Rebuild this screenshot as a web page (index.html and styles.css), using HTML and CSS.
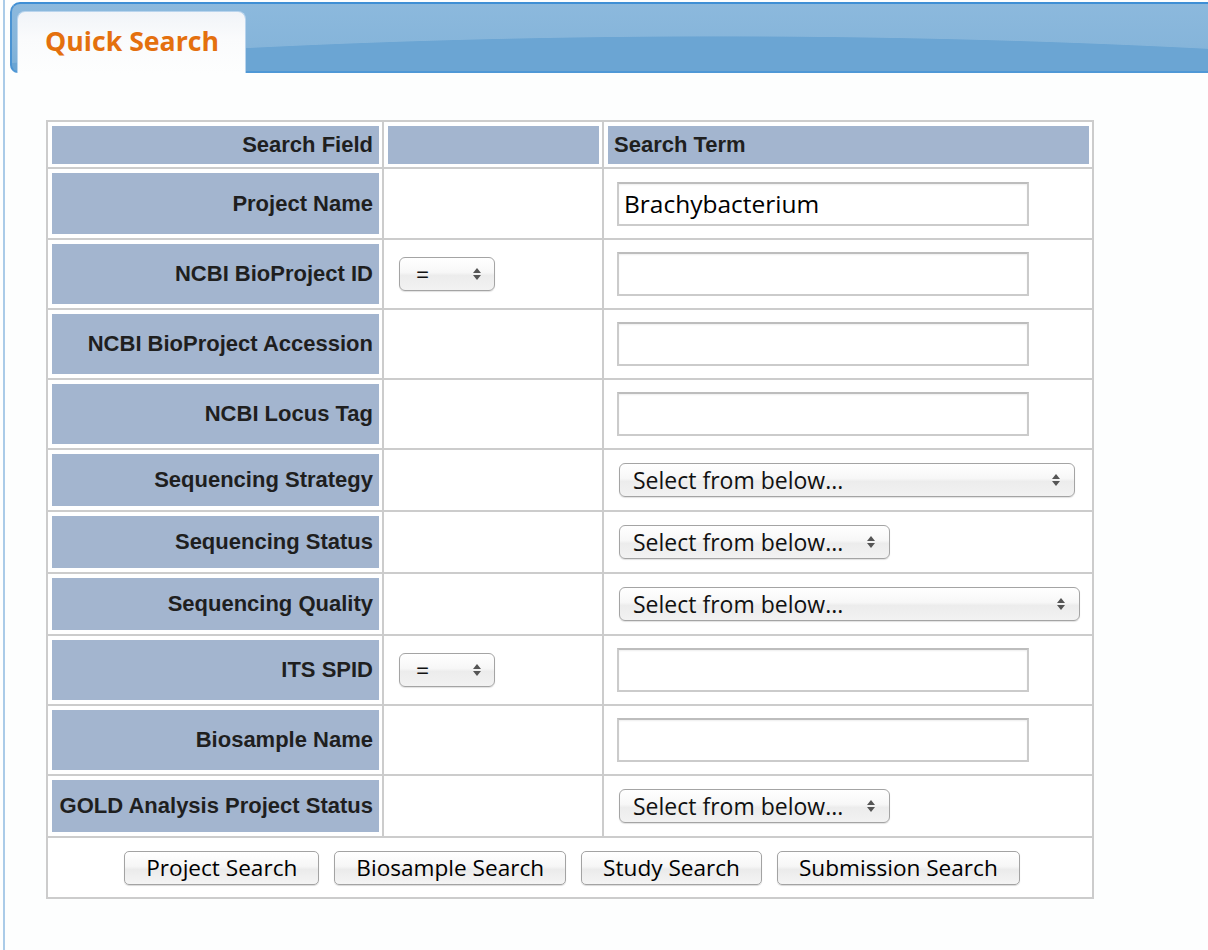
FILE: index.html
```html
<!DOCTYPE html>
<html lang="en">
<head>
<meta charset="utf-8">
<title>Quick Search</title>
<link rel="stylesheet" href="styles.css">
</head>
<body>
<div class="page">
  <div class="tabbar">
    <div class="tab">Quick Search</div>
  </div>
  <div class="content">
    <table class="search">
      <colgroup><col class="c1"><col class="c2"><col class="c3"></colgroup>
      <thead>
        <tr class="r-head">
          <th class="label">Search Field</th>
          <th class="label"></th>
          <th class="label left">Search Term</th>
        </tr>
      </thead>
      <tbody>
        <tr class="r-text r-first">
          <td class="label">Project Name</td>
          <td class="ctrl"></td>
          <td class="ctrl"><input class="text" type="text" value="Brachybacterium"></td>
        </tr>
        <tr class="r-text">
          <td class="label">NCBI BioProject ID</td>
          <td class="ctrl"><div class="select-wrap"><select class="sel sel-op"><option>=</option></select><svg class="arrows" viewBox="0 0 8 12"><path d="M0 5 L4 0 L8 5 Z M0 7 L8 7 L4 12 Z"/></svg></div></td>
          <td class="ctrl"><input class="text" type="text"></td>
        </tr>
        <tr class="r-text">
          <td class="label">NCBI BioProject Accession</td>
          <td class="ctrl"></td>
          <td class="ctrl"><input class="text" type="text"></td>
        </tr>
        <tr class="r-text">
          <td class="label">NCBI Locus Tag</td>
          <td class="ctrl"></td>
          <td class="ctrl"><input class="text" type="text"></td>
        </tr>
        <tr class="r-select">
          <td class="label">Sequencing Strategy</td>
          <td class="ctrl"></td>
          <td class="ctrl"><div class="select-wrap"><select class="sel sel-strategy"><option>Select from below...</option></select><svg class="arrows" viewBox="0 0 8 12"><path d="M0 5 L4 0 L8 5 Z M0 7 L8 7 L4 12 Z"/></svg></div></td>
        </tr>
        <tr class="r-select">
          <td class="label">Sequencing Status</td>
          <td class="ctrl"></td>
          <td class="ctrl"><div class="select-wrap"><select class="sel sel-status"><option>Select from below...</option></select><svg class="arrows" viewBox="0 0 8 12"><path d="M0 5 L4 0 L8 5 Z M0 7 L8 7 L4 12 Z"/></svg></div></td>
        </tr>
        <tr class="r-select">
          <td class="label">Sequencing Quality</td>
          <td class="ctrl"></td>
          <td class="ctrl"><div class="select-wrap"><select class="sel sel-quality"><option>Select from below...</option></select><svg class="arrows" viewBox="0 0 8 12"><path d="M0 5 L4 0 L8 5 Z M0 7 L8 7 L4 12 Z"/></svg></div></td>
        </tr>
        <tr class="r-text">
          <td class="label">ITS SPID</td>
          <td class="ctrl"><div class="select-wrap"><select class="sel sel-op"><option>=</option></select><svg class="arrows" viewBox="0 0 8 12"><path d="M0 5 L4 0 L8 5 Z M0 7 L8 7 L4 12 Z"/></svg></div></td>
          <td class="ctrl"><input class="text" type="text"></td>
        </tr>
        <tr class="r-text">
          <td class="label">Biosample Name</td>
          <td class="ctrl"></td>
          <td class="ctrl"><input class="text" type="text"></td>
        </tr>
        <tr class="r-select">
          <td class="label">GOLD Analysis Project Status</td>
          <td class="ctrl"></td>
          <td class="ctrl"><div class="select-wrap"><select class="sel sel-status"><option>Select from below...</option></select><svg class="arrows" viewBox="0 0 8 12"><path d="M0 5 L4 0 L8 5 Z M0 7 L8 7 L4 12 Z"/></svg></div></td>
        </tr>
        <tr class="r-buttons">
          <td class="buttons" colspan="3">
            <div class="button-row">
              <button class="btn" type="button">Project Search</button>
              <button class="btn" type="button">Biosample Search</button>
              <button class="btn" type="button">Study Search</button>
              <button class="btn" type="button">Submission Search</button>
            </div>
          </td>
        </tr>
      </tbody>
    </table>
  </div>
</div>
</body>
</html>
```

FILE: styles.css
```css
html, body {
  margin: 0;
  padding: 0;
  background: #fdfefe;
}

.page {
  margin-left: 3px;
  border-left: 2px solid #aacbe8;
  min-height: 950px;
  padding-top: 2px;
  box-sizing: border-box;
}

/* ---------- tab bar ---------- */
.tabbar {
  margin-left: 5px;
  height: 71px;
  box-sizing: border-box;
  border-top: 2px solid #3f8fd5;
  border-left: 2px solid #4a93d3;
  border-bottom: 2px solid #4f98d6;
  border-radius: 10px 0 0 8px;
  background:
    radial-gradient(ellipse 2000px 411px at 708px 443px, #6ba5d3 99.8%, rgba(107,165,211,0) 100%),
    linear-gradient(#8cb9dd, #86b5da 60%, #7aaed7);
  display: flex;
  align-items: flex-end;
}

.tab {
  margin-left: 5px;
  margin-bottom: -2px;
  width: 229px;
  height: 62px;
  box-sizing: border-box;
  border: 1px solid #b9d4ed;
  border-bottom: none;
  border-radius: 8px 8px 0 0;
  background: linear-gradient(#f1f4f8, #fafbfc 45%, #fdfefe);
  padding: 10px 0 0 27px;
  font-family: "Open Sans", "DejaVu Sans", sans-serif;
  font-weight: 700;
  font-size: 26.7px;
  line-height: 37px;
  color: #e4700e;
}

/* ---------- table ---------- */
.content {
  padding: 47px 0 0 41px;
}

.search {
  width: 1048px;
  table-layout: fixed;
  border-collapse: separate;
  border-spacing: 2px;
  background: #cccccc;
}

.search .c1 { width: 334px; }
.search .c2 { width: 218px; }
.search .c3 { width: 488px; }

.search th,
.search td {
  background: #ffffff;
  padding: 0;
  vertical-align: middle;
}

.r-head { height: 45px; }
.r-text { height: 68px; }
.r-first { height: 69px; }
.r-select { height: 60px; }
.r-buttons { height: 59px; }

.search .label {
  background: #a3b5cf;
  border: solid #ffffff;
  border-width: 4px 3px 4px 4px;
  text-align: right;
  padding: 0 6px 0 6px;
  font-family: "Liberation Sans", Arial, sans-serif;
  font-weight: 700;
  font-size: 22px;
  color: #1f1f1f;
  white-space: nowrap;
}

.r-head .label {
  border-width: 4px 3px 3px 4px;
}

.search .label.left {
  text-align: left;
}

.search .ctrl {
  padding-left: 13px;
}

/* ---------- form controls ---------- */
.text {
  display: block;
  width: 412px;
  height: 44px;
  box-sizing: border-box;
  margin: 0;
  border: 2px solid #cbcbcb;
  border-top-color: #bdbdbd;
  padding: 0 5px;
  background: #ffffff;
  box-shadow: inset 0 1px 2px rgba(0, 0, 0, 0.07);
  font-family: "Open Sans", "DejaVu Sans", sans-serif;
  font-size: 24.5px;
  color: #000000;
  outline: none;
}

.select-wrap {
  position: relative;
  width: fit-content;
  margin-left: 2px;
}

.sel {
  display: block;
  -webkit-appearance: none;
  appearance: none;
  height: 34px;
  box-sizing: border-box;
  margin: 0;
  border: 1px solid #a4a4a4;
  border-radius: 6px;
  padding: 0 30px 0 13px;
  background: linear-gradient(#ffffff, #f7f7f7 45%, #ececec 55%, #f2f2f2);
  box-shadow: 0 1px 1px rgba(0, 0, 0, 0.12);
  font-family: "Open Sans", "DejaVu Sans", sans-serif;
  font-size: 23px;
  line-height: 32px;
  color: #111111;
  outline: none;
}

.sel-op { width: 96px; padding-left: 16px; }
.sel-strategy { width: 456px; }
.sel-status { width: 271px; }
.sel-quality { width: 461px; }

.arrows {
  position: absolute;
  right: 15px;
  top: 50%;
  width: 8px;
  height: 12px;
  margin-top: -6px;
  fill: #555555;
  pointer-events: none;
}

.sel-op + .arrows { right: 14px; }

/* ---------- buttons ---------- */
.search .buttons {
  text-align: center;
}

.button-row {
  display: flex;
  justify-content: center;
  gap: 15px;
  padding-left: 4px;
}

.btn {
  height: 34px;
  box-sizing: border-box;
  margin: 0;
  border: 1px solid #a3a3a3;
  border-radius: 5px;
  padding: 0 21px;
  background: linear-gradient(#ffffff, #f6f6f6 45%, #ebebeb 55%, #f4f4f4);
  box-shadow: 0 1px 1px rgba(0, 0, 0, 0.15);
  font-family: "Open Sans", "DejaVu Sans", sans-serif;
  font-size: 22.6px;
  line-height: 32px;
  color: #000000;
}
```
